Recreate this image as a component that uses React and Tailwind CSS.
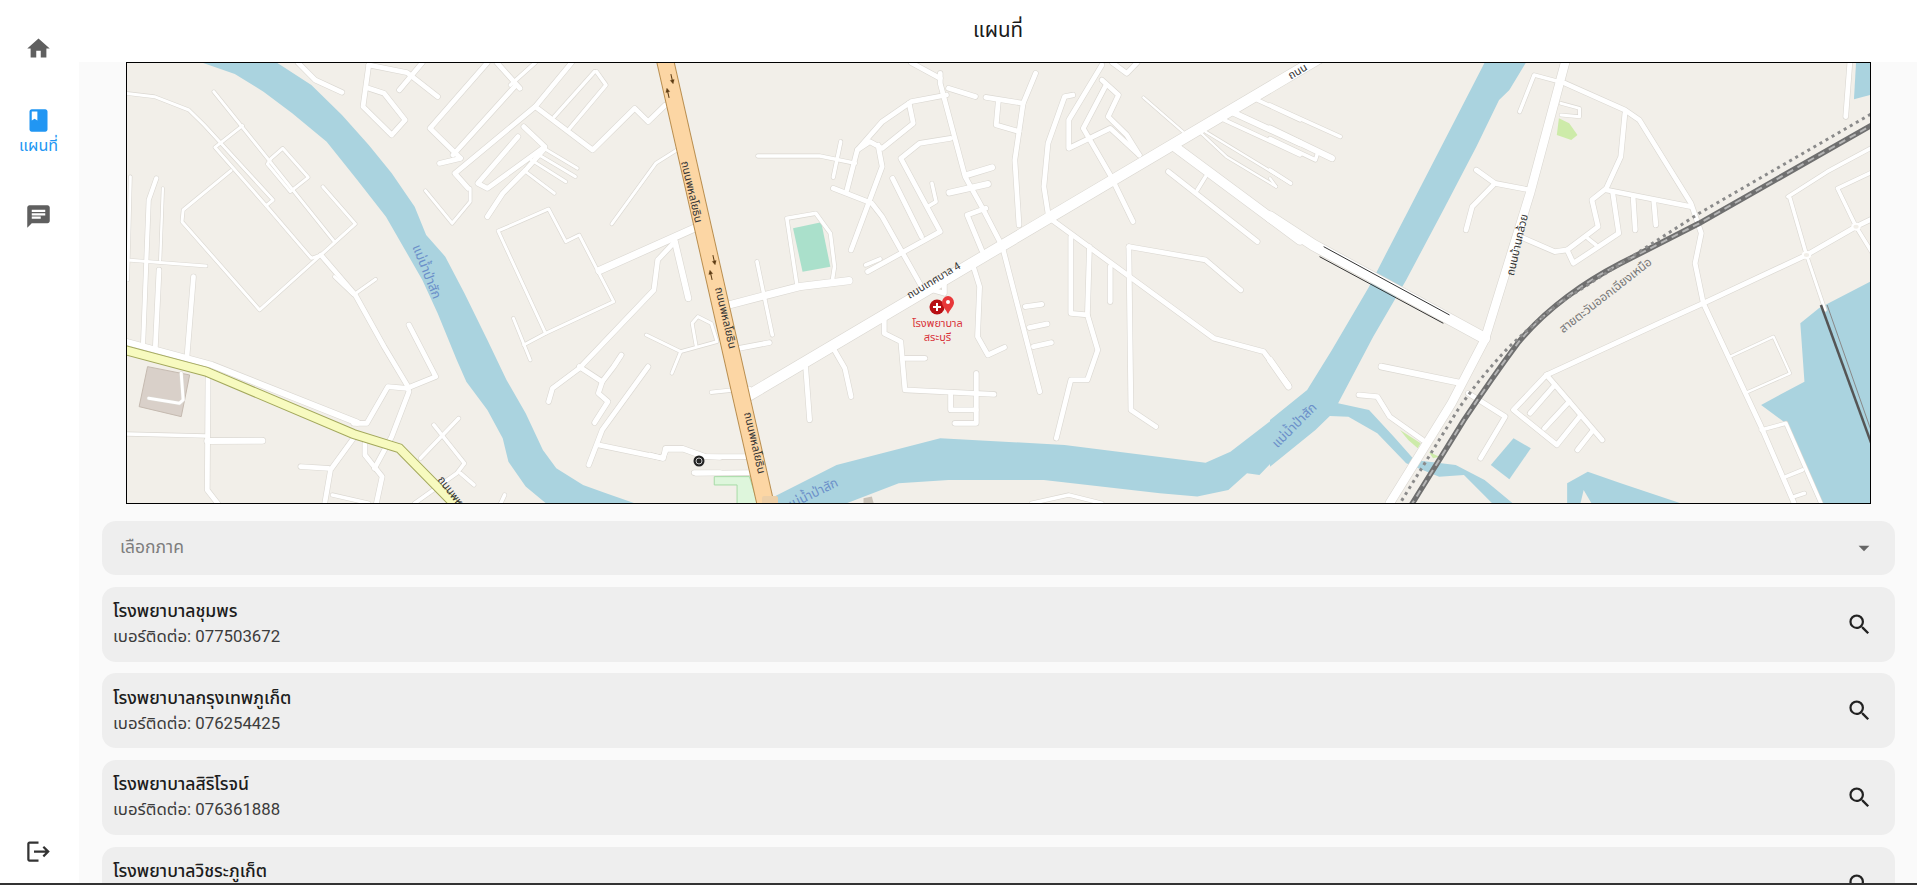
import React from 'react'
import { MdHome, MdBook, MdChat, MdLogout, MdSearch, MdArrowDropDown } from 'react-icons/md'

const hospitals = [
  { name: 'โรงพยาบาลชุมพร', phone: '077503672' },
  { name: 'โรงพยาบาลกรุงเทพภูเก็ต', phone: '076254425' },
  { name: 'โรงพยาบาลสิริโรจน์', phone: '076361888' },
  { name: 'โรงพยาบาลวิชระภูเก็ต', phone: '076361234' },
]

// the three groups use the coords read off the zoomed crops
const T_A = 'translate(120 60) scale(0.3827 0.3333)'
const T_B = 'translate(650 60) scale(0.4146 0.3333)'
const T_C = 'translate(1270 60) scale(0.4127 0.3333)'

const RAIL = 'M340 1340L470 1080Q540 950 600 850Q650 775 720 710Q780 655 850 610L1040 490L1480 180'

const roadsA = [
  [2.5, 'M17 100L90 110L180 150L220 195L400 420L382 437L248 262L320 197'],
  [2.5, 'M245 95L560 545'],
  [2.5, 'M395 295L425 265L492 352L445 395L385 312Z'],
  [2.5, 'M530 380L615 492L525 585L365 750L162 485L165 450L290 332'],
  [2.5, 'M382 437L500 595L525 585'],
  [4, 'M525 585L615 705L690 860L750 975L755 995L710 1130L665 1225'],
  [2.5, 'M560 650L610 705L668 658'],
  [4, 'M755 795L825 950L750 985L700 980L645 1090L610 1090'],
  [2.5, 'M27 350L20 660'],
  [3.5, 'M95 355L75 420L60 860'],
  [2, 'M112 385L105 600'],
  [2.5, 'M17 600L225 618'],
  [4, 'M102 630L92 870'],
  [4, 'M192 650L175 890'],
  [5, 'M17 846L240 915L620 1088'],
  [2.5, 'M160 940L165 1020L155 1030L75 1015'],
  [4, 'M230 955L228 1290L255 1330'],
  [3, 'M17 1122L225 1128'],
  [5, 'M228 1143L372 1142'],
  [4, 'M610 1135L550 1230L535 1330'],
  [4, 'M472 1220L545 1225'],
  [4, 'M640 1150L640 1185L685 1250L670 1330'],
  [3, 'M785 1195L885 1075'],
  [3, 'M820 1095L900 1210L880 1240L770 1330'],
  [3, 'M890 1240L925 1275'],
  [3, 'M1005 1305L995 1330'],
  [3, 'M555 1305L650 1330'],
  [4, 'M1120 1025L1130 985L1200 925L1395 690L1405 600L1450 545'],
  [6, 'M1252 632L1500 505'],
  [5, 'M1450 545L1485 715'],
  [4, 'M1200 920L1260 965L1290 920L1310 885'],
  [4, 'M1260 965L1250 1000L1275 1025L1240 1088'],
  [4, 'M1380 920L1260 1110L1225 1215'],
  [4, 'M1250 1155L1420 1195L1425 1165L1470 1165L1530 1190L1568 1192'],
  [4, 'M1500 1238L1568 1238'],
  [2.5, 'M1120 447L988 513L1112 820L1290 725L1200 525L1165 545Z'],
  [2.5, 'M1028 775L1072 900'],
  [2.5, 'M1055 855L1112 820'],
  [4, 'M465 8L510 60L580 97'],
  [4, 'M650 15L635 140L710 225L745 180L690 100L650 85'],
  [4, 'M650 15L750 38L830 110'],
  [4, 'M790 8L730 90'],
  [4, 'M960 8L810 205L890 295L835 310'],
  [4, 'M985 8L1045 85'],
  [4, 'M870 285L1035 75'],
  [3, 'M1085 8L1020 75'],
  [4, 'M1180 8L1085 140L1235 270L1345 145L1380 185L1425 135'],
  [4, 'M1085 140L875 340L910 385'],
  [3, 'M1245 35L1270 75L1175 205'],
  [3, 'M1240 35L1135 170'],
  [4, 'M1055 200L1110 260L960 385L935 370L1040 230'],
  [4, 'M1110 265L1060 330L1000 400L960 470'],
  [2.5, 'M1115 270L1195 325'],
  [2.5, 'M1095 285L1190 350'],
  [2.5, 'M1075 300L1165 365'],
  [2.5, 'M1060 335L1135 400'],
  [2.5, 'M915 385L915 425L868 490L798 392'],
  [2.5, 'M1285 492L1400 310L1455 270'],
  [2.5, 'M1375 825L1465 875L1442 940'],
  [2.5, 'M1465 875L1560 845L1545 790L1510 770L1495 790L1505 855'],
]

const roadsB = [
  [4, 'M700 40L700 70L760 350L800 440L850 560L940 995'],
  [4, 'M630 8L700 55'],
  [4, 'M720 85L785 110'],
  [4, 'M810 112L900 130L930 40'],
  [4, 'M900 130L880 300L890 495'],
  [4, 'M840 125L835 195L890 215'],
  [4, 'M1020 105L1000 110L960 250L950 380L960 460'],
  [4, 'M1090 15L1010 180L1010 265L1110 205L1180 285'],
  [4, 'M1100 75L1045 205L1110 345L1165 485'],
  [4, 'M1090 60L1130 105L1105 170L1150 225L1180 285'],
  [4, 'M1115 8L1150 40L1175 8'],
  [4, 'M715 105L630 125L560 185L500 270L475 390'],
  [4, 'M625 130L635 190L560 265L530 245L500 270'],
  [4, 'M550 255L560 320L485 570'],
  [4, 'M725 235L650 250L605 295L700 515L525 635'],
  [4, 'M585 355L655 530'],
  [3, 'M680 370L690 425L670 440'],
  [3, 'M520 615L555 597'],
  [4, 'M442 385L535 430L560 470L655 680L710 700L710 670'],
  [3, 'M260 288L410 288L495 310'],
  [3, 'M460 245L442 352'],
  [6, 'M190 735L360 680L480 662'],
  [3, 'M258 605L295 825'],
  [3, 'M355 680L330 475L400 460L435 520L445 620L440 660'],
  [5, 'M765 345L825 322'],
  [5, 'M722 398L815 372'],
  [4, 'M810 445L765 465L800 570'],
  [4, 'M780 620L795 680L790 830L815 885L855 862'],
  [4, 'M905 740L945 733'],
  [4, 'M915 803L958 792'],
  [4, 'M925 860L968 848'],
  [4, 'M565 770L565 820L605 845L615 990L830 1003'],
  [4, 'M615 895L663 895'],
  [4, 'M787 940L787 1090L735 1090'],
  [4, 'M725 1003L725 1050L787 1050'],
  [4, 'M440 860L470 925L485 1010'],
  [4, 'M375 915L385 1080'],
  [3, 'M148 997L240 985'],
  [4, 'M215 865L288 848'],
  [4, 'M1015 530L1015 760L1055 765L1080 870L1055 960L1015 960L980 1135'],
  [4, 'M1055 765L1060 560'],
  [4, 'M1110 620L1110 725'],
  [4, 'M970 480L1360 835L1480 875L1540 975'],
  [4, 'M1155 560L1160 1050L1220 1100'],
  [4, 'M1155 560L1340 600L1425 690'],
  [4, 'M1250 335L1465 545'],
  [3, 'M1320 390L1340 350'],
  [2, 'M1190 112L1285 215'],
  [3, 'M1465 120L1568 180'],
  [5, 'M1410 160L1568 250'],
  [3, 'M1385 180L1568 285'],
  [2, 'M1330 220L1390 290L1510 380'],
  [2, 'M1340 215L1545 370'],
  [4, 'M0 1185L30 1195L40 1168L80 1168L130 1190L235 1190'],
  [4, 'M110 1240L240 1238'],
  [3, 'M920 1330L1010 1305L1090 1330'],
  [9, 'M240 1005L1640 -25'],
  [8, 'M1260 255L1568 540'],
]

const roadsC = [
  [9, 'M0 470L105 555L520 835'],
  [7, 'M715 8L630 400L520 840L440 1030L290 1330'],
  [3, 'M605 155L640 45L715 70'],
  [4, 'M715 70L860 150L895 180L1020 430L1045 520L1030 610L1050 730'],
  [2.5, 'M705 130L750 145L750 170L705 165'],
  [4, 'M860 160L850 290L815 385L780 420L795 500L720 570L735 610L845 520L830 395'],
  [4, 'M815 390L1020 440'],
  [4, 'M880 415L885 510'],
  [4, 'M930 425L935 495'],
  [3, 'M770 535L790 555'],
  [4, 'M615 535L690 575L720 570'],
  [4, 'M500 330L545 370L630 390'],
  [4, 'M545 370L490 440L475 510'],
  [3, 'M0 135L170 230'],
  [5, 'M0 205L150 295'],
  [3, 'M0 235L110 300L115 280'],
  [3, 'M0 330L50 370'],
  [2, 'M0 355L15 380'],
  [5, 'M0 900L45 980'],
  [4, 'M1405 8L1395 170'],
  [4, 'M670 945L960 780L1050 730L1300 585L1420 500L1470 470'],
  [3, 'M1255 410L1350 335L1470 255'],
  [3, 'M1300 585L1260 415'],
  [4, 'M1050 730L1190 1100L1270 1330'],
  [3, 'M1190 1110L1250 1090L1335 1330'],
  [3, 'M1250 1250L1290 1230'],
  [3, 'M1270 1310L1295 1300'],
  [3, 'M1470 600L1420 500L1375 385L1470 330'],
  [2.5, 'M1300 585L1345 750'],
  [2, 'M1115 890L1220 830L1260 940L1150 1000'],
  [5, 'M270 920L465 970'],
  [4, 'M215 1005L260 1010L290 1070L370 1140'],
  [4, 'M480 1000L570 1070L510 1195'],
  [4, 'M670 945L590 1050L695 1155L750 1070'],
  [4, 'M670 945L805 1140'],
  [4, 'M745 1170L780 1115'],
  [4, 'M665 1105L725 1025'],
  [4, 'M630 1060L690 975'],
]

function RoadLayer({ roads, transform, casing }) {
  return (
    <g transform={transform} fill="none" strokeLinecap="round" strokeLinejoin="round">
      {roads.map(([w, d], i) => (
        <path
          key={i}
          d={d}
          vectorEffect="non-scaling-stroke"
          stroke={casing ? '#dbd8d2' : '#ffffff'}
          strokeWidth={casing ? w * 1.2 + 1.2 : w * 1.2}
        />
      ))}
    </g>
  )
}

function MapLabel({ x, y, angle, size = 11, fill = '#333333', children }) {
  return (
    <text
      x={x}
      y={y}
      fontSize={size}
      fill={fill}
      textAnchor="middle"
      dominantBaseline="middle"
      transform={`rotate(${angle} ${x} ${y})`}
    >
      {children}
    </text>
  )
}

function Arrow({ x, y, angle }) {
  return (
    <g transform={`translate(${x} ${y}) rotate(${angle})`} fill="#5b3a12" stroke="#5b3a12">
      <path d="M0 -5V2" strokeWidth="1" />
      <path d="M-2 1L0 5L2 1Z" strokeWidth="0.3" />
    </g>
  )
}

function MapView() {
  return (
    <div className="mx-[47px] h-[442px] w-[1745px] shrink-0 border border-black">
      <svg viewBox="127 63 1743 440" className="block h-full w-full bg-[#f2efe9]">
        <g transform={T_A} fill="#aad3df">
          <path d="M215 8L300 42L375 95L450 160L540 245L620 360L695 470L745 570L790 660L830 760L880 900L905 965L960 1050L1000 1135L1015 1205L1060 1280L1115 1332L1350 1332L1270 1300L1210 1275L1140 1225L1105 1170L1060 1060L1010 960L960 840L900 700L850 590L800 525L770 440L710 340L650 255L580 165L500 75L410 8Z" />
        </g>
        <g transform={T_B} fill="#aad3df">
          <path d="M300 1310L450 1215L700 1135L1000 1155L1340 1208L1400 1175L1568 1015L1640 930L1640 1040L1568 1120L1470 1245L1440 1240L1395 1290L1320 1310L1230 1300L950 1260L720 1260L600 1270L470 1332L300 1332Z" />
          <path d="M345 505L413 487L435 620L368 635Z" fill="#aae0cb" />
          <path d="M155 1250L240 1250L260 1332L210 1332L210 1275L155 1275Z" fill="#def6dc" stroke="#a6dba6" vectorEffect="non-scaling-stroke" />
          <path d="M515 1315L535 1310L540 1332L515 1332Z" fill="#c9c2b8" />
        </g>
        <g transform={T_C} fill="#aad3df">
          <path d="M520 8L440 200L340 440L240 680L150 870L90 990L0 1080L0 1220L110 1110L145 1068L190 1070L260 1120L330 1210L410 1250L470 1245L540 1332L590 1332L520 1260L450 1215L350 1200L300 1130L240 1050L165 1030L250 830L330 660L420 450L500 260L555 120L580 90L620 8Z" />
          <path d="M1420 8H1470V100L1415 118Z" />
          <path d="M1470 655L1330 745L1285 790L1295 965L1190 1035L1250 1090L1330 1332H1470Z" />
          <path d="M590 1135L632 1165L580 1258L535 1215Z" />
          <path d="M720 1332L720 1270L770 1235L850 1270L1000 1332L780 1332L760 1290L752 1332Z" />
          <g fill="#cdeba9">
            <path d="M700 175L725 190L745 225L730 240L695 225Z" />
            <path d="M315 1110L365 1150L358 1165L335 1140Z" />
            <path d="M385 1175L410 1190L395 1195Z" />
          </g>
        </g>
        <g transform={T_A}>
          <path d="M72 920L182 945L160 1070L50 1040Z" fill="#d9d0c9" stroke="#c5bab0" vectorEffect="non-scaling-stroke" />
        </g>

        <RoadLayer roads={roadsA} transform={T_A} casing />
        <RoadLayer roads={roadsB} transform={T_B} casing />
        <RoadLayer roads={roadsC} transform={T_C} casing />
        <RoadLayer roads={roadsA} transform={T_A} />
        <RoadLayer roads={roadsB} transform={T_B} />
        <RoadLayer roads={roadsC} transform={T_C} />

        {/* bridge */}
        <g transform={T_C} fill="none" stroke="#333333" strokeWidth="1">
          <path d="M130 560L435 765" vectorEffect="non-scaling-stroke" />
          <path d="M120 590L420 790" vectorEffect="non-scaling-stroke" />
        </g>

        {/* highway 1 */}
        <path d="M665 60L766 506" stroke="#b98e4f" strokeWidth="18" fill="none" />
        <path d="M665 60L766 506" stroke="#fcd6a4" strokeWidth="16" fill="none" />
        <rect x="762" y="496" width="16" height="10" rx="2" fill="#eccfa8" />
        <Arrow x={672} y={79} angle={-13} />
        <Arrow x={668} y={93} angle={167} />
        <Arrow x={714} y={260} angle={-13} />
        <Arrow x={711} y={275} angle={167} />

        {/* secondary road */}
        <g transform={T_A} fill="none">
          <path d="M5 868L225 935L610 1122L730 1165L880 1340" stroke="#a3a85c" strokeWidth="10" vectorEffect="non-scaling-stroke" />
          <path d="M5 868L225 935L610 1122L730 1165L880 1340" stroke="#f7fabf" strokeWidth="8" vectorEffect="non-scaling-stroke" />
        </g>

        {/* railways */}
        <g transform={T_C} fill="none">
          <path d={RAIL} stroke="#6f6f6f" strokeWidth="5.5" vectorEffect="non-scaling-stroke" />
          <path d={RAIL} stroke="#b5b5b5" strokeWidth="2" strokeDasharray="7 5" vectorEffect="non-scaling-stroke" />
          <path d="M310 1340L455 1050Q510 950 580 860Q640 790 700 730L1040 460L1480 145" stroke="#8a8a8a" strokeWidth="3" strokeDasharray="3 4" vectorEffect="non-scaling-stroke" />
          <path d="M1335 735L1470 1195" stroke="#555555" strokeWidth="2.5" vectorEffect="non-scaling-stroke" />
          <path d="M1350 735L1470 1160" stroke="#888888" strokeWidth="1" vectorEffect="non-scaling-stroke" />
          <circle cx="1300" cy="585" r="9" fill="#f2efe9" stroke="#ffffff" strokeWidth="2" vectorEffect="non-scaling-stroke" />
          <circle cx="1420" cy="500" r="9" fill="#f2efe9" stroke="#ffffff" strokeWidth="2" vectorEffect="non-scaling-stroke" />
        </g>

        {/* labels */}
        <MapLabel x={934} y={281} angle={-31} size={10.5}>ถนนเทศบาล 4</MapLabel>
        <MapLabel x={691} y={192} angle={77}>ถนนพหลโยธิน</MapLabel>
        <MapLabel x={725} y={318} angle={77}>ถนนพหลโยธิน</MapLabel>
        <MapLabel x={754} y={443} angle={77}>ถนนพหลโยธิน</MapLabel>
        <MapLabel x={1518} y={245} angle={-77}>ถนนบ้านกล้วย</MapLabel>
        <MapLabel x={1606} y={296} angle={-38} size={12} fill="#777777">สายตะวันออกเฉียงเหนือ</MapLabel>
        <MapLabel x={426} y={272} angle={68} size={13} fill="#6a8fc9">แม่น้ำป่าสัก</MapLabel>
        <MapLabel x={812} y={495} angle={-26} size={13} fill="#6a8fc9">แม่น้ำป่าสัก</MapLabel>
        <MapLabel x={1295} y={426} angle={-45} size={13} fill="#6a8fc9">แม่น้ำป่าสัก</MapLabel>
        <MapLabel x={452} y={494} angle={52}>ถนนพหล</MapLabel>
        <MapLabel x={1298} y={72} angle={-30}>ถนน</MapLabel>

        {/* temple */}
        <circle cx="699" cy="461" r="5.5" fill="#222222" />
        <circle cx="699" cy="461" r="3" fill="none" stroke="#cccccc" strokeWidth="1" />

        {/* hospital marker */}
        <circle cx="937" cy="307" r="7.5" fill="#b80f14" />
        <path d="M937 303V311M933 307H941" stroke="#ffffff" strokeWidth="2" />
        <path d="M948 296a6 6.5 0 0 1 6 6.5c0 4-4 7-6 11.5c-2-4.500-6-7.500-6-11.500a6 6.500 0 0 1 6-6.500Z" fill="#e8383a" />
        <circle cx="948" cy="302" r="2" fill="#ffffff" />
        <text x="937.500" y="324" fontSize="11" fill="#d9343a" textAnchor="middle" dominantBaseline="middle">โรงพยาบาล</text>
        <text x="937.500" y="338" fontSize="11" fill="#d9343a" textAnchor="middle" dominantBaseline="middle">สระบุรี</text>
      </svg>
    </div>
  )
}

function Sidebar() {
  return (
    <div className="flex w-[79px] shrink-0 flex-col items-center bg-white pr-[2px]">
      <MdHome size={27} className="mt-[35px] text-[#5f5f5f]" />
      <MdBook size={27} className="mt-[45px] text-[#2196f3]" />
      <span className="mt-[1px] text-[16px] leading-[22px] text-[#2196f3]">แผนที่</span>
      <MdChat size={27} className="mt-[46px] text-[#5f5f5f]" />
      <MdLogout size={27} className="mt-auto mb-[18px] text-[#333333]" />
    </div>
  )
}

export default function App() {
  return (
    <div className="flex h-[885px] w-full flex-col overflow-hidden bg-white font-['Roboto','Noto_Sans_Thai','Noto_Sans',sans-serif]">
      <div className="flex h-[883px] w-full">
        <Sidebar />
        <div className="flex min-w-0 flex-1 flex-col">
          <div className="flex h-[62px] shrink-0 items-center justify-center bg-white pb-[1px] text-[20.5px] text-[#1a1a1a]">
            แผนที่
          </div>
          <div className="flex min-h-0 flex-1 flex-col overflow-hidden bg-[#fafafa]">
            <MapView />
            <div className="mr-[22px] ml-[23px] mt-[17px] flex flex-col gap-[11.67px]">
              <div className="flex h-[54px] shrink-0 items-center justify-between rounded-[14px] bg-[#eeeeee] pr-[18px] pl-[18px]">
                <span className="pb-[1px] text-[17.5px] text-[#7d7d7d]">เลือกภาค</span>
                <MdArrowDropDown size={26} className="text-[#666666]" />
              </div>
              {hospitals.map(h => (
                <div key={h.name} className="flex h-[75px] shrink-0 items-center justify-between rounded-[14px] bg-[#eeeeee] pr-[22px] pl-[11px]">
                  <div className="flex flex-col">
                    <span className="text-[17.6px] leading-[25px] font-medium text-[#1c1c1c]">{h.name}</span>
                    <span className="text-[16.8px] leading-[25px] text-[#3c3c3c]">เบอร์ติดต่อ: {h.phone}</span>
                  </div>
                  <MdSearch size={27} className="text-[#222222]" />
                </div>
              ))}
            </div>
          </div>
        </div>
      </div>
      <div className="h-[2px] w-full shrink-0 bg-[#333333]" />
    </div>
  )
}
